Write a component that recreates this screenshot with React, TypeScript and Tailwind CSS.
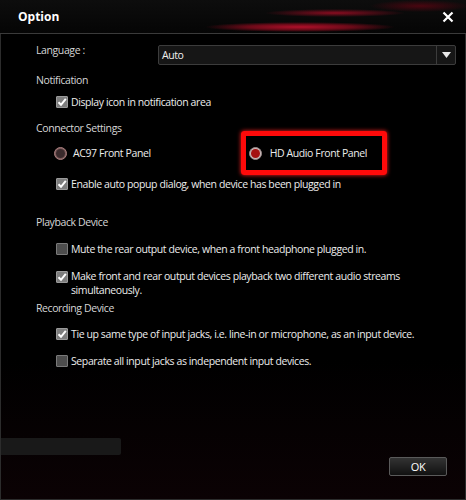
import React from 'react';

const CheckBox = ({ checked }: { checked: boolean }) => (
  <span
    className={`flex h-[12px] w-[12px] shrink-0 items-center justify-center rounded-[1px] border ${
      checked ? 'border-[#9a9a9a] bg-[#7d7d7d]' : 'border-[#7a7a7a] bg-[#4d4d4d]'
    }`}
  >
    {checked && (
      <svg width="10" height="10" viewBox="0 0 10 10">
        <path d="M1.5 5.2 L4 7.8 L8.8 1.8" fill="none" stroke="#ffffff" strokeWidth="2" />
      </svg>
    )}
  </span>
);

const Radio = ({ selected }: { selected: boolean }) => (
  <span
    className={`flex h-[13px] w-[13px] shrink-0 items-center justify-center rounded-full border ${
      selected ? 'border-[#9a8a8a] bg-[#c9b9b9]' : 'border-[#a87d7d] bg-[#7a5a5a]'
    }`}
  >
    <span
      className={`h-[9px] w-[9px] rounded-full ${selected ? 'bg-[#a51212]' : 'bg-[#3a2a2c]'}`}
    />
  </span>
);

const CheckRow = ({ checked, children, className = '' }: { checked: boolean; children: React.ReactNode; className?: string }) => (
  <div className={`flex items-start gap-[3px] pl-[55px] text-[#ececec] ${className}`}>
    <span className="mt-[1px]">
      <CheckBox checked={checked} />
    </span>
    <span>{children}</span>
  </div>
);

const Label = ({ children, className = '' }: { children: React.ReactNode; className?: string }) => (
  <div className={`pl-[35px] text-[#d6d6d6] ${className}`}>{children}</div>
);

export default function App() {
  return (
    <div
      className="relative h-[500px] w-[466px] overflow-hidden bg-black text-[10.5px] leading-[14px] tracking-[-0.4px]"
      style={{ fontFamily: '"Open Sans", "Noto Sans", sans-serif' }}
    >
      {/* title bar */}
      <div className="relative h-[34px] border-b border-[#3a3a3a] bg-[radial-gradient(ellipse_95px_5px_at_300px_27px,#b0102a_0%,#6a0a18_55%,transparent_100%),radial-gradient(ellipse_70px_4px_at_335px_13px,#8a0c20_0%,transparent_100%),radial-gradient(ellipse_50px_6px_at_420px_6px,#4a0610_0%,transparent_100%),linear-gradient(to_bottom,#0d0d0d,#050505)]">
        <div className="flex h-full items-center justify-between pl-[18px] pr-[12px]">
          <span className="text-[12px] font-bold tracking-normal text-white">Option</span>
          <svg width="12" height="12" viewBox="0 0 12 12">
            <path d="M1.5 1.5 L10.5 10.5 M10.5 1.5 L1.5 10.5" stroke="#ffffff" strokeWidth="2.2" />
          </svg>
        </div>
      </div>

      <div className="flex h-[466px] flex-col border-x border-b border-[#2c2c2c] bg-[linear-gradient(to_bottom,#000000_0%,#000000_70%,#0b0204_100%)]">
        {/* language */}
        <div className="mt-[9px] flex items-start">
          <div className="w-[157px] pl-[35px] text-[#d6d6d6]">Language :</div>
          <div className="mt-[2px] flex h-[20px] w-[298px] items-center rounded-[2px] border border-[#3c3c3c] bg-[#161616]">
            <span className="flex-1 pl-[3px] text-[#f0f0f0]">Auto</span>
            <span className="flex h-full w-[19px] items-center justify-center border-l border-[#3c3c3c]">
              <svg width="9" height="6" viewBox="0 0 9 6">
                <path d="M0 0 L9 0 L4.5 6 Z" fill="#e8e8e8" />
              </svg>
            </span>
          </div>
        </div>

        <Label className="mt-[8px]">Notification</Label>
        <CheckRow checked className="mt-[8px]">Display icon in notification area</CheckRow>

        <Label className="mt-[12px]">Connector Settings</Label>
        <div className="relative mt-[11px] flex items-center text-[#ececec]">
          <div className="flex items-center gap-[6px] pl-[53px]">
            <Radio selected={false} />
            <span>AC97 Front Panel</span>
          </div>
          <div className="ml-[98px] flex items-center gap-[8px]">
            <Radio selected />
            <span>HD Audio Front Panel</span>
          </div>
          <div className="absolute left-[240px] top-[-15px] h-[44px] w-[146px] rounded-[3px] border-[5px] border-[#ff0a0a] shadow-[0_0_4px_#ff2020]" />
        </div>
        <CheckRow checked className="mt-[17px]">Enable auto popup dialog, when device has been plugged in</CheckRow>

        <Label className="mt-[24px]">Playback Device</Label>
        <CheckRow checked={false} className="mt-[13px]">Mute the rear output device, when a front headphone plugged in.</CheckRow>
        <CheckRow checked className="mt-[14px] leading-[13.5px]">
          Make front and rear output devices playback two different audio streams
          <br />
          simultaneously.
        </CheckRow>

        <Label className="mt-[4px]">Recording Device</Label>
        <CheckRow checked className="mt-[12px]">Tie up same type of input jacks, i.e. line-in or microphone, as an input device.</CheckRow>
        <CheckRow checked={false} className="mt-[13px]">Separate all input jacks as independent input devices.</CheckRow>

        <div className="mt-[70px] h-[17px] w-[120px] rounded-r-[2px] bg-[#191919]" />
        <div className="mt-[2px] flex justify-end pr-[18px]">
          <button className="h-[19px] w-[58px] rounded-[2px] border border-[#5a5a5a] bg-[linear-gradient(to_bottom,#333333,#111111)] text-[11px] text-white">
            OK
          </button>
        </div>
      </div>
    </div>
  );
}
